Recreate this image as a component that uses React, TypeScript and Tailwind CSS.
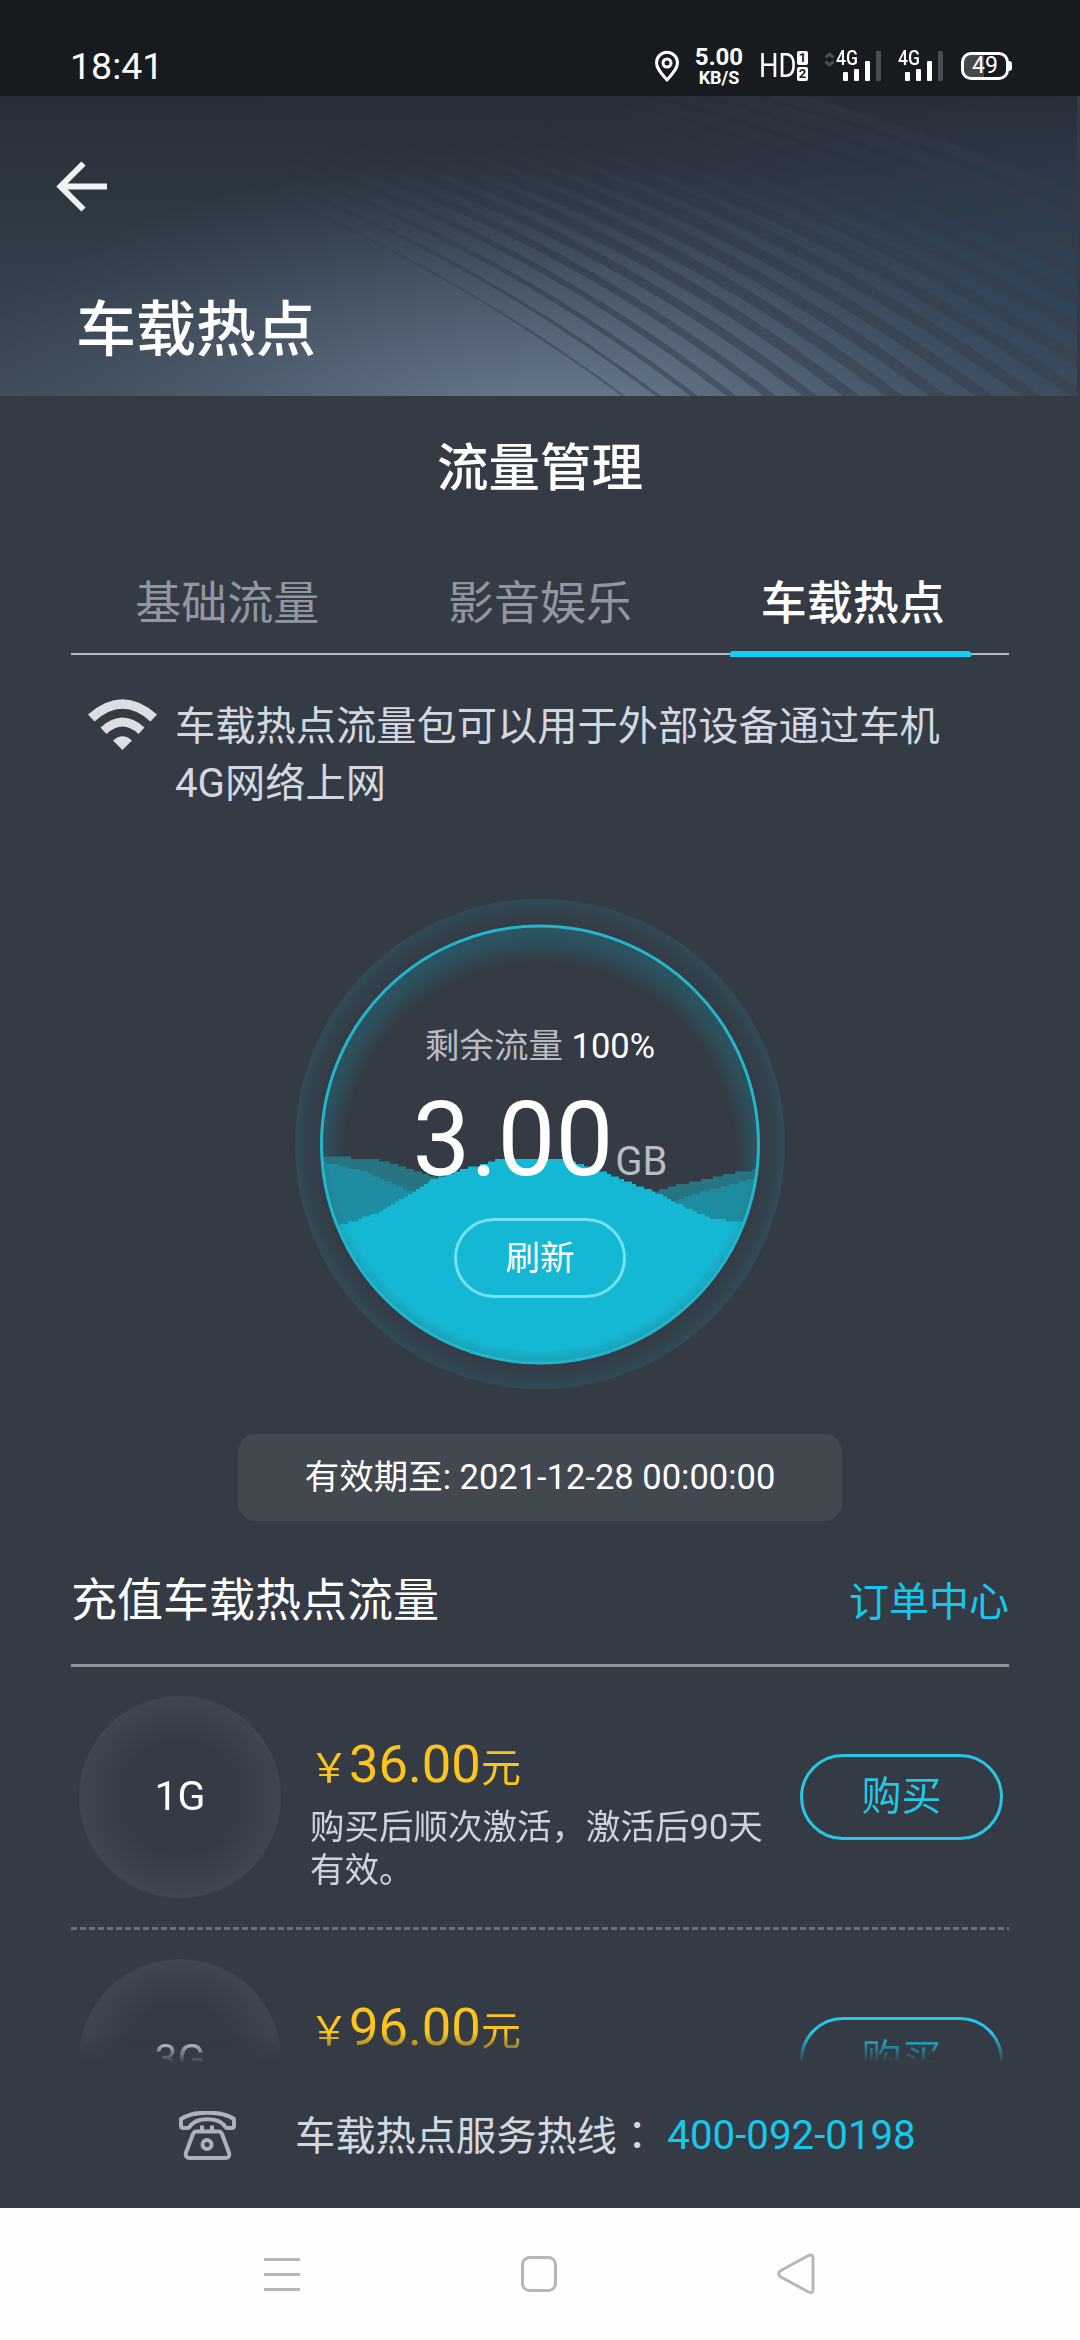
import { clsx } from "clsx";

const tabs = ["基础流量", "影音娱乐", "车载热点"];

const packages = [
  { size: "1G", price: "36.00", desc: "购买后顺次激活，激活后90天有效。" },
  { size: "3G", price: "96.00", desc: "购买后顺次激活，激活后90天有效。" },
];

export default function App() {
  return (
    <div className="w-[1080px] h-[2340px] flex flex-col overflow-hidden bg-[#343b45] text-white font-[Roboto,'Noto_Sans_CJK_SC',sans-serif]">
      <StatusBar />
      <Header />

      <main className="h-[1667px] shrink-0 px-[71px] flex flex-col overflow-hidden">
        <h2 className="mt-[39px] h-[68px] leading-[68px] text-center text-[51.5px] font-medium">
          流量管理
        </h2>

        <nav className="mt-[49px] h-[103px] grid grid-cols-3 border-b-2 border-[#b4bac4]">
          {tabs.map((tab, i) => (
            <Tab key={tab} label={tab} active={i === 2} />
          ))}
        </nav>

        <div className="mt-[41px] h-[117px] shrink-0 pl-[17px] flex">
          <WifiIcon />
          <p className="mt-[3px] ml-[18px] w-[780px] text-[40.25px] leading-[56.5px] text-[#d3d8e0]">
            车载热点流量包可以用于外部设备通过车机4G网络上网
          </p>
        </div>

        <Gauge />

        <div className="mt-[45px] mx-auto w-[604px] h-[87px] shrink-0 rounded-[18px] bg-[#414850] flex items-center justify-center text-[34.5px]">
          有效期至: 2021-12-28 00:00:00
        </div>

        <div className="h-[146px] shrink-0 pt-4 flex items-center justify-between border-b-[3px] border-[#8f9598]">
          <h3 className="text-[46px]">充值车载热点流量</h3>
          <a className="pt-1 text-[40px] text-[#17c8ee]">订单中心</a>
        </div>

        <div className="h-[396px] shrink-0 overflow-hidden [mask-image:linear-gradient(to_bottom,#000_366px,transparent_396px)]">
          {packages.map((item) => (
            <PackageRow key={item.size} {...item} />
          ))}
        </div>
      </main>

      <footer className="h-[145px] shrink-0 pl-[179px] flex items-center">
        <PhoneIcon />
        <p className="ml-[59px] text-[40.25px] text-[#d3d8e0]">
          车载热点服务热线
          <span className="font-['Noto_Sans_CJK_TC',sans-serif]">：</span>
        </p>
        <a className="ml-[10px] pt-0.5 text-[40.25px] text-[#14c8ee]">400-092-0198</a>
      </footer>

      <SystemNav />
    </div>
  );
}

function StatusBar() {
  return (
    <div className="h-24 shrink-0 bg-[#171a1e] flex items-start">
      <span className="ml-[70px] mt-[43px] w-[100px] text-[37.5px] leading-[46px]">
        18:41
      </span>

      <svg className="ml-[484px] mt-[50px]" width="26" height="32" viewBox="0 0 26 32" fill="none" stroke="#fff" strokeWidth="3">
        <path d="M13 30C8 24 2.5 19 2.5 12.8a10.5 10.5 0 0 1 21 0C23.5 19 18 24 13 30Z" strokeLinejoin="round" />
        <circle cx="13" cy="13" r="4" />
      </svg>

      <div className="ml-[14px] mt-[46px] w-[50px] flex flex-col items-center font-bold">
        <span className="text-[24px] leading-[23px]">5.00</span>
        <span className="text-[18px] leading-[17px]">KB/S</span>
      </div>

      <span className="ml-[15px] mt-[49px] w-[38px] text-[33px] leading-[34px] inline-block origin-left scale-x-[0.83]">
        HD
      </span>
      <div className="mt-[51px] flex flex-col gap-[2px] text-[#171a1e] text-[13px] leading-[14px] font-bold text-center">
        <span className="w-[11px] h-[14px] rounded-[2px] bg-white">1</span>
        <span className="w-[11px] h-[14px] rounded-[2px] bg-white">2</span>
      </div>

      <svg className="ml-4 mt-[52px]" width="11" height="15" fill="none" stroke="#4a4d51" strokeWidth="3">
        <path d="M1.5 5.5 5.5 2l4 3.5M1.5 9.5l4 3.5 4-3.5" />
      </svg>
      <Signal className="ml-px" />
      <Signal className="ml-[17px]" />

      <div className="ml-[18px] mt-[52px] flex items-center">
        <div className="w-[48px] h-7 rounded-[10px] border-[3px] border-white bg-[linear-gradient(to_right,#46484c_20px,transparent_20px)] text-center text-[23px] leading-[22px]">
          49
        </div>
        <div className="w-[3px] h-2.5 rounded-r-full bg-white" />
      </div>
    </div>
  );
}

function Signal({ className }: { className?: string }) {
  return (
    <div className={clsx("relative mt-[51px] w-[45px] h-[30px] pl-[7px] flex items-end gap-1.5", className)}>
      <span className="absolute left-0 -top-px text-[20px] leading-[16px] font-medium origin-left scale-x-[0.88]">
        4G
      </span>
      <i className="w-[5px] shrink-0 h-[9px] rounded-[1px] bg-white" />
      <i className="w-[5px] shrink-0 h-3 rounded-[1px] bg-white" />
      <i className="w-[5px] shrink-0 h-5 rounded-[1px] bg-white" />
      <i className="w-[5px] shrink-0 h-[30px] rounded-[1px] bg-[#4a4d51]" />
    </div>
  );
}

function Header() {
  return (
    <header className="relative h-[300px] shrink-0 overflow-hidden">
      <HeaderBackdrop />
      <div className="relative pt-[65px] pl-[56px]">
        <svg width="52" height="52" viewBox="0 0 52 52" fill="none" stroke="#f1f2f4" strokeWidth="6">
          <path d="M27.5 2.5 4.5 25.5l23 23M5 25.5h46" />
        </svg>
        <h1 className="mt-[76px] ml-5 h-[84px] text-[60px] leading-[84px] font-medium">
          车载热点
        </h1>
      </div>
    </header>
  );
}

function HeaderBackdrop() {
  const stripes = Array.from({ length: 19 }, (_, i) => i);

  return (
    <svg className="absolute inset-0" width="1080" height="300" viewBox="0 96 1080 300">
      <defs>
        <linearGradient id="base" x1="0" y1="0" x2="0" y2="1">
          <stop offset="0" stopColor="#282e39" />
          <stop offset="0.4" stopColor="#2e3944" />
          <stop offset="1" stopColor="#3e4a57" />
        </linearGradient>
        <radialGradient id="light" gradientUnits="userSpaceOnUse" cx="0" cy="0" r="1" gradientTransform="translate(560 440) scale(640 290)">
          <stop offset="0" stopColor="#74859a" stopOpacity="0.95" />
          <stop offset="0.5" stopColor="#62748a" stopOpacity="0.5" />
          <stop offset="1" stopColor="#4a5a6c" stopOpacity="0" />
        </radialGradient>
        <radialGradient id="blue" gradientUnits="userSpaceOnUse" cx="0" cy="0" r="1" gradientTransform="translate(1080 290) scale(400 200)">
          <stop offset="0" stopColor="#2b4560" stopOpacity="0.55" />
          <stop offset="1" stopColor="#2b4560" stopOpacity="0" />
        </radialGradient>
        <linearGradient id="stripe" gradientUnits="userSpaceOnUse" x1="200" y1="0" x2="1080" y2="0">
          <stop offset="0" stopColor="#28303c" stopOpacity="0" />
          <stop offset="0.4" stopColor="#28303c" stopOpacity="0.42" />
          <stop offset="0.75" stopColor="#2e3846" stopOpacity="0.45" />
          <stop offset="1" stopColor="#3a3c44" stopOpacity="0.4" />
        </linearGradient>
      </defs>
      <rect y="96" width="1077" height="300" fill="url(#base)" />
      <rect y="96" width="1077" height="300" fill="url(#light)" />
      <rect y="96" width="1077" height="300" fill="url(#blue)" />
      <g fill="none" stroke="url(#stripe)">
        {stripes.map((i) => (
          <path
            key={i}
            strokeWidth={Math.min(2 + i * 1.4, 11)}
            d={`M${150 + 14 * i} ${150 - 6 * i}Q${425 + 25 * i} ${238 - 11 * i} ${668 + 33 * i + 0.8 * i * i} 430`}
          />
        ))}
      </g>
      <rect x="1077" y="96" width="3" height="300" fill="#343b45" />
    </svg>
  );
}

function Tab({ label, active }: { label: string; active: boolean }) {
  return (
    <div className="relative flex justify-center">
      <span
        className={clsx(
          "text-[46px] leading-[103px]",
          active ? "font-medium text-white" : "text-[#9296a0]"
        )}
      >
        {label}
      </span>
      {active && (
        <i className="absolute -bottom-[2px] left-[34px] w-[241px] h-1.5 rounded-t-[3px] bg-[#12cdf4]" />
      )}
    </div>
  );
}

function WifiIcon() {
  return (
    <svg className="mt-[3px] shrink-0" width="69" height="51" viewBox="0 0 69 51" fill="#dcdfe1">
      <path d="M0 15.5Q34.5-15 69 15.5L62.5 22.5Q34.5-3 6.5 22.5Z" />
      <path d="M12.5 28.5Q34.5 8.5 56.5 28.5L50.5 35Q34.5 20 18.5 35Z" />
      <path d="M25 41.5Q34.5 33 44 41.5L34.5 51Z" />
    </svg>
  );
}

type Point = [number, number];

// Surface of each wave layer, in the gauge's own coordinates
const frontWave: Point[] = [[25, 330], [55, 323], [80, 314], [105, 300], [135, 281], [165, 271], [200, 261], [235, 260], [265, 261], [292, 267], [325, 280], [360, 294], [390, 309], [415, 319], [440, 323], [470, 326]];
const middleWave: Point[] = [[20, 261], [45, 267], [65, 272], [85, 280], [108, 290], [150, 310], [340, 320], [385, 300], [410, 292], [440, 284], [470, 276]];
const backWave: Point[] = [[20, 258], [68, 259], [95, 264], [130, 275], [200, 300], [300, 310], [365, 290], [390, 284], [420, 278], [445, 272], [475, 270]];

// The surface is rasterised in coarse steps, so the edge looks like stairs
function wavePath(points: Point[]) {
  let d = `M${points[0][0]} 500`;
  for (let i = 0; i < points.length - 1; i++) {
    const [x0, y0] = points[i];
    const [x1, y1] = points[i + 1];
    for (let x = x0; x < x1; x += 4) {
      const y = y0 + ((y1 - y0) * (x - x0)) / (x1 - x0);
      d += `V${Math.round(y / 2.5) * 2.5}H${Math.min(x + 4, x1)}`;
    }
  }
  return d + "V500Z";
}

function Gauge() {
  return (
    <div className="relative mt-[86px] mx-auto w-[490px] h-[490px] shrink-0">
      <svg className="absolute inset-0" width="490" height="490">
        <defs>
          <radialGradient id="halo">
            <stop offset="0.895" stopColor="#1b9fb0" stopOpacity="0" />
            <stop offset="0.96" stopColor="#1b9fb0" stopOpacity="0.08" />
            <stop offset="1" stopColor="#1b9fb0" stopOpacity="0.17" />
          </radialGradient>
          <radialGradient id="glow" gradientUnits="userSpaceOnUse" cx="245" cy="258" r="232">
            <stop offset="0.84" stopColor="#1b8294" stopOpacity="0" />
            <stop offset="0.93" stopColor="#1b8294" stopOpacity="0.3" />
            <stop offset="1" stopColor="#1b8294" stopOpacity="0.38" />
          </radialGradient>
          <radialGradient id="edge" gradientUnits="userSpaceOnUse" cx="245" cy="240" r="225">
            <stop offset="0.93" stopColor="#28616f" stopOpacity="0" />
            <stop offset="1" stopColor="#28616f" stopOpacity="0.3" />
          </radialGradient>
          <clipPath id="dial">
            <circle cx="245" cy="245.5" r="219" />
          </clipPath>
        </defs>
        <circle cx="245" cy="245" r="245" fill="url(#halo)" />
        <circle cx="245" cy="245.5" r="219" fill="#343b45" />
        <g clipPath="url(#dial)">
          <rect width="490" height="490" fill="url(#glow)" />
          <path d={wavePath(backWave)} fill="#277482" />
          <path d={wavePath(middleWave)} fill="#1f8da1" />
          <path d={wavePath(frontWave)} fill="#15b8d4" />
          <rect y="260" width="490" height="230" fill="url(#edge)" />
        </g>
        <circle cx="245" cy="245.5" r="218.5" fill="none" stroke="#22b6cc" strokeWidth="3" />
      </svg>

      <div className="relative h-full flex flex-col items-center">
        <p className="mt-[122px] text-[34.5px] leading-[50px] text-[#b9bcc3]">
          剩余流量 <span className="text-white">100%</span>
        </p>
        <p className="mt-[9px] h-[120px] leading-[120px] whitespace-nowrap">
          <span className="text-[103px]">3.00</span>
          <span className="ml-0.5 text-[40px] text-[#b9bcc3]">GB</span>
        </p>
        <button className="mt-[18px] w-[172px] h-20 rounded-full border-[3px] border-[#77e1f3] text-[34.5px] leading-[74px]">
          刷新
        </button>
      </div>
    </div>
  );
}

function PackageRow({ size, price, desc }: { size: string; price: string; desc: string }) {
  return (
    <div className="h-[263px]">
      <div className="h-[260px] px-2 flex items-center">
        <div className="w-[202px] h-[202px] shrink-0 rounded-full bg-[radial-gradient(closest-side,#343b45_55%,#3f4650_100%)] flex items-center justify-center text-[41px]">
          {size}
        </div>
        <div className="pt-[26px] ml-7 w-[460px] shrink-0">
          <p className="h-[70px] leading-[70px] text-[#fcc41c] whitespace-nowrap">
            <span className="text-[40px]">￥</span>
            <span className="text-[52.5px]">{price}</span>
            <span className="text-[40px]">元</span>
          </p>
          <p className="mt-[7px] ml-px text-[34.5px] leading-[43px] text-[#ced3db]">{desc}</p>
        </div>
        <button className="ml-[31px] w-[203px] h-[86px] shrink-0 rounded-full border-[3px] border-[#27c6e6] text-[40px] leading-[80px] text-[#21c8ea]">
          购买
        </button>
      </div>
      <div className="h-[3px] bg-[repeating-linear-gradient(to_right,#6a7079_0_6px,transparent_6px_9px)]" />
    </div>
  );
}

function PhoneIcon() {
  return (
    <svg width="57" height="50" viewBox="0 0 57 50" fill="none" stroke="#adb1ba" strokeWidth="4" strokeLinejoin="round">
      <path d="M2 8C14-.5 43-.5 55 8V14.5Q55 17 52.5 17H49Q46.5 17 45.5 14.5C39 6 18 6 11.5 14.5Q10.5 17 8 17H4.5Q2 17 2 14.5Z" />
      <path d="M17.5 20.5H39.5Q42 20.5 43 23L50 41.5Q51.5 47 46 47H11Q5.5 47 7 41.5L14 23Q15 20.5 17.5 20.5Z" />
      <path d="M23 14.5v5M33 14.5v5" />
      <circle cx="28" cy="33.5" r="4.5" />
    </svg>
  );
}

function SystemNav() {
  return (
    <div className="h-[132px] shrink-0 bg-[#fefefe] px-[254px] flex items-center justify-between">
      <svg className="ml-2.5" width="36" height="40" stroke="#b7b7b7" strokeWidth="3">
        <path d="M0 5.5h36M0 20.5h36M0 35.5h36" />
      </svg>
      <svg width="36" height="36" fill="none" stroke="#b7b7b7" strokeWidth="3">
        <rect x="1.5" y="1.5" width="33" height="33" rx="7" />
      </svg>
      <svg className="mr-[11px]" width="38" height="42" fill="none" stroke="#b7b7b7" strokeWidth="3" strokeLinejoin="round">
        <path d="M3 18 31.5 2.5Q36 1 36 5V37Q36 41 31.5 39L3 23.5Q.5 21 3 18Z" />
      </svg>
    </div>
  );
}
